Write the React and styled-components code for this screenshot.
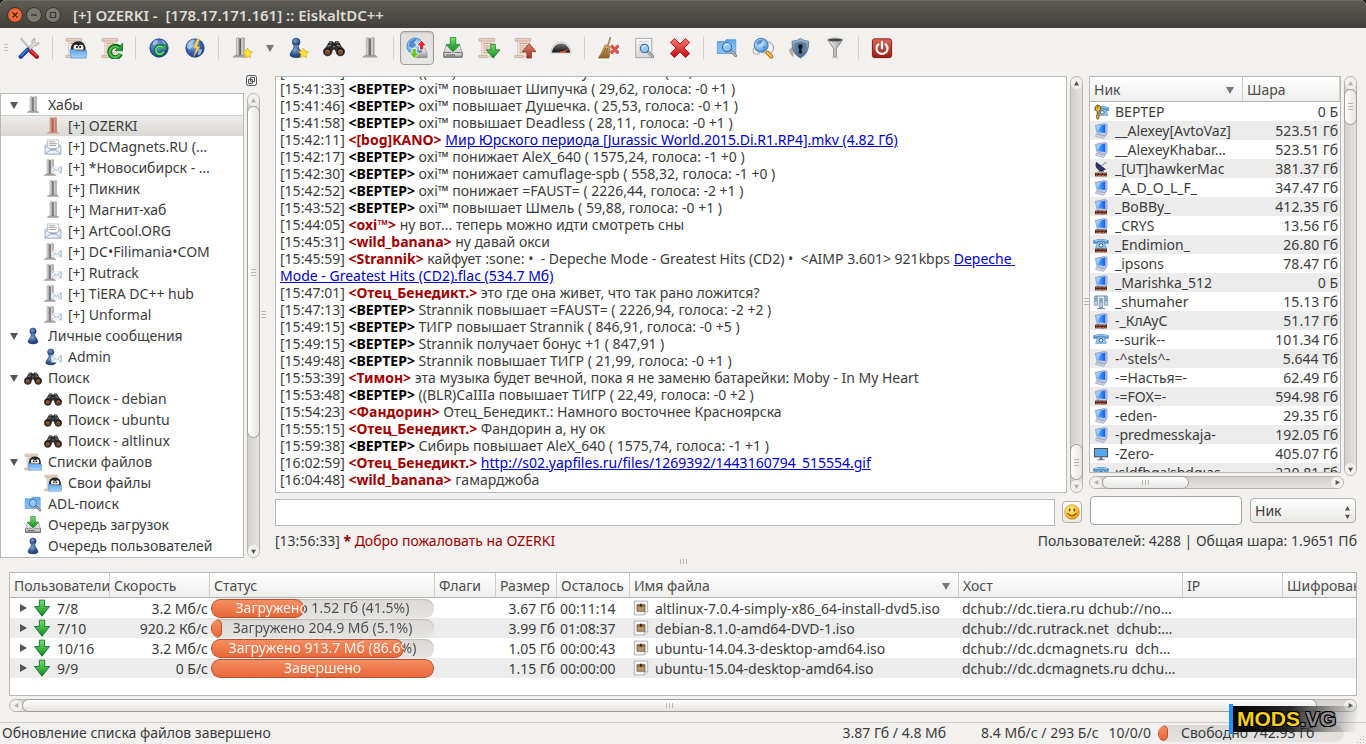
import React from "react";
import styled, { createGlobalStyle, css } from "styled-components";

const GlobalStyle = createGlobalStyle`
  * { box-sizing: border-box; }
  html, body { margin: 0; padding: 0; background: #1b1a18; }
  body, button, input, select, table {
    font-family: "Noto Sans", "Open Sans", "DejaVu Sans", sans-serif;
    font-size: 14px;
    color: #3c3c3c;
  }
  svg { display: block; flex: none; }
`;

/* ---------- shared gradients ---------- */

const Defs = styled.svg`
  position: absolute;
  width: 0;
  height: 0;
`;

const lin = (id, a, b, horizontal) => (
  <linearGradient id={id} x1="0" y1="0" x2={horizontal ? 1 : 0} y2={horizontal ? 0 : 1}>
    <stop offset="0" stopColor={a} />
    <stop offset="1" stopColor={b} />
  </linearGradient>
);

const rad = (id, a, b, c) => (
  <radialGradient id={id} cx="0.4" cy="0.35" r="0.7">
    <stop offset="0" stopColor={a} />
    <stop offset="0.6" stopColor={b} />
    <stop offset="1" stopColor={c} />
  </radialGradient>
);

const Gradients = () => (
  <Defs aria-hidden="true">
    <defs>
      {rad("gGlobe", "#8fb4e4", "#3560ae", "#1c3c84")}
      {rad("gGlobeLight", "#dceffd", "#7db8ec", "#3a78c4")}
      {rad("gSmile", "#fff2a0", "#fcc631", "#d98a08")}
      {rad("gPawn", "#7fa3cf", "#31578f", "#1b355f")}
      {lin("gGreen", "#7be070", "#0f8a22")}
      {lin("gRed", "#f47a70", "#c00d0d")}
      {lin("gBrown", "#d98476", "#a83226")}
      {lin("gFolder", "#5aa4ea", "#a9d4fa")}
      {lin("gMetal", "#fafafa", "#b4b4b4")}
      {lin("gPost", "#f4f4f4", "#9a9a9a", true)}
      {lin("gPostRed", "#f4c9bd", "#b95f4a", true)}
      {lin("gDisk", "#f3f3f3", "#8c8c8c")}
      {lin("gDark", "#777777", "#111111")}
      {lin("gShield", "#a6bdd2", "#3f5f80")}
      {lin("gPower", "#d9695c", "#9c1a10")}
      {lin("gScreen", "#6fc0ff", "#0f5fe8", true)}
      {lin("gStraw", "#dcb878", "#94672a")}
      {lin("gPage", "#fbfbfb", "#d8d8da")}
    </defs>
  </Defs>
);

/* ---------- icon parts ---------- */

const Scroll = () => (
  <g>
    <path d="M4 3h13v18.500H4z" fill="#f3e6dc" stroke="#d2bcae" strokeWidth=".8" />
    <path d="M1.500 1.500h16.500q1.200 1.500 0 3H1.500q-1.200-1.500 0-3z" fill="#e6cfc0" stroke="#bfa595" strokeWidth=".8" />
    <path d="M1 20h9v2.500H1q-1-1.200 0-2.500z" fill="#e6cfc0" stroke="#bfa595" strokeWidth=".7" />
    <path d="M6 7h9M6 9.500h8M6 12h9M6 14.500h7M6 17h8" stroke="#bf937c" strokeWidth="1.200" strokeDasharray="2.400 .7" />
  </g>
);

const Post = ({ red }) => (
  <g>
    <path d="M4 22h16l-2.500-2h-11z" fill={red ? "#d8a294" : "#a8a8a8"} stroke={red ? "#c58d7e" : "#8b8b8b"} strokeWidth=".5" />
    <path d="M8 1h3v19H8z" fill={red ? "url(#gPostRed)" : "url(#gPost)"} stroke={red ? "#b87060" : "#8f8f8f"} strokeWidth=".7" />
    <path d="M13 1h3.500v19H13z" fill={red ? "url(#gPostRed)" : "url(#gPost)"} stroke={red ? "#b87060" : "#8f8f8f"} strokeWidth=".7" />
    <path d="M12 1.500v18.500" stroke={red ? "#93382a" : "#3f3f3f"} strokeWidth="1.400" />
  </g>
);

const Star = () => (
  <path d="M18 12l1.800 3.400 3.700.6-2.700 2.700.6 3.800-3.400-1.700-3.400 1.700.6-3.800-2.700-2.700 3.700-.6z" fill="#ffe13a" stroke="#dcae10" strokeWidth=".8" strokeLinejoin="round" />
);

const Pawn = () => (
  <g>
    <path d="M10 9h4q0 3.500 3 6.500 2 2.500 1.500 5-2.500 2-6.500 2t-6.500-2q-.5-2.500 1.500-5 3-3 3-6.500z" fill="url(#gPawn)" stroke="#1d3a68" strokeWidth=".7" />
    <circle cx="12" cy="5.500" r="4.200" fill="url(#gPawn)" stroke="#1d3a68" strokeWidth=".7" />
    <ellipse cx="12" cy="9.800" rx="3.400" ry="1" fill="#5f86b8" />
  </g>
);

const Disk = () => (
  <g>
    <path d="M5 8h14l3 9v5H2v-5z" fill="url(#gMetal)" stroke="#8a8a8a" strokeWidth=".8" />
    <path d="M2 17h20v5H2z" fill="url(#gDisk)" stroke="#5e5e5e" strokeWidth=".9" />
    <path d="M5 19.500h9" stroke="#444" strokeWidth="1.600" strokeDasharray="1.200 .8" />
    <circle cx="12" cy="13" r="4" fill="#e8e8e8" stroke="#a9a9a9" strokeWidth=".6" />
  </g>
);

const Lens = ({ x = 10, y = 9, r = 5 }) => (
  <g>
    <path d={`M${x + r * 0.7} ${y + r * 0.7}l6 6`} stroke="#777" strokeWidth="3" strokeLinecap="round" />
    <path d={`M${x + r * 0.7 + 1} ${y + r * 0.7 + 1}l5 5`} stroke="#cfcfcf" strokeWidth="1.200" strokeLinecap="round" />
    <circle cx={x} cy={y} r={r} fill="#8cc6f6" fillOpacity=".85" stroke="#3f6ea6" strokeWidth="1.200" />
    <path d={`M${x - r * 0.6} ${y - 1}q${r * 0.4}-${r * 0.6} ${r}-${r * 0.4}`} stroke="#e8f6ff" strokeWidth="1.200" fill="none" />
  </g>
);

const Envelope = () => (
  <g>
    <path d="M10 10h13v9H10z" fill="#f6f9fc" stroke="#cfd8e2" strokeWidth=".6" />
    <path d="M10.500 10.500l6 5 6-5M10.500 18.500l4.500-4.500M22.500 18.500l-4.500-4.500" fill="none" stroke="#8fb0d2" strokeWidth="1" />
    <path d="M22.800 10v9" stroke="#7b9cc0" strokeWidth="1" />
  </g>
);

const Bricks = () => (
  <g>
    <path d="M3 17.500h18V23H3z" fill="#3a1c14" />
    <path d="M4 18.200h4v1.600H4zM9 18.200h5v1.600H9zM15 18.200h5v1.600h-5zM4 21h2v1.500H4zM7 21h5v1.500H7zM13 21h4v1.500h-4zM18 21h2.500v1.500H18z" fill="#c06347" />
  </g>
);

const Screen = () => (
  <g>
    <path d="M5 17l10 3 4.500-5.500v3.500L16 23 4 20z" fill="#dde2f0" stroke="#7c86ac" strokeWidth=".9" />
    <path d="M3.500 3.500L17 .8l4 1v13.700l-4 3.500L6 15.500z" fill="#c3cdea" stroke="#7480ac" strokeWidth=".9" />
    <path d="M5 4.800l13.500-2.600V15L7 14z" fill="url(#gScreen)" />
    <path d="M5.500 5l7-1.400-5.500 8.500z" fill="#bfe4ff" fillOpacity=".6" />
  </g>
);

const Phone = () => (
  <g>
    <path d="M1 5.500q11-4 22 0v4h-5.500L16.500 7h-9l-1 2.500H1z" fill="#5aa0dc" stroke="#2f6fae" strokeWidth=".9" />
    <path d="M7 8.500h10l3 8.500H4z" fill="#9cccf0" stroke="#3a7ab8" strokeWidth=".9" />
    <circle cx="12" cy="12.500" r="2.800" fill="#e6f3fc" stroke="#1f4f86" strokeWidth="1.300" />
    <path d="M3 5.700q9-2.800 18 0" stroke="#cfe8fa" fill="none" />
  </g>
);

const drawings = {
  tools: (
    <g>
      <path d="M3 1.500l9.500 11" stroke="#9fa3a8" strokeWidth="2" />
      <path d="M3 1.500l9.500 11" stroke="#e9ebee" strokeWidth=".8" />
      <path d="M12 13.500l8.500 8" stroke="#b00e12" strokeWidth="4.600" strokeLinecap="round" />
      <path d="M12.500 13.300l7.500 7" stroke="#ea4a4a" strokeWidth="1.600" strokeLinecap="round" />
      <path d="M18.500 1.500a4 4 0 0 0-3 5.500l-5 6 2 2 5.500-5.500a4 4 0 0 0 5-3.500l-2.600 1.200-2.400-2.200z" fill="#d7d9dc" stroke="#93979c" strokeWidth=".8" />
      <path d="M10.500 14l-7.500 7.500" stroke="#153f9e" strokeWidth="4.600" strokeLinecap="round" />
      <path d="M10 13.800l-6.500 6.500" stroke="#5c8fe8" strokeWidth="1.400" strokeLinecap="round" />
    </g>
  ),
  fileList: (
    <g>
      <Scroll />
      <path d="M6.500 15Q6 4.500 14.500 4.500T22.500 15z" fill="#23262b" />
      <path d="M9.500 14q-1-6 3-5.500 2 .3 2.300 2 .3-1.700 2.200-2 4-.5 3 5.500z" fill="#f4f4f4" />
      <circle cx="13" cy="11" r="1.100" />
      <circle cx="16.500" cy="11" r="1.100" />
      <path d="M12.800 12.800l2 2 2-2z" fill="#efb52c" />
      <path d="M5.500 13.500h6l1 1.500H24l-1 8H6.500z" fill="url(#gFolder)" stroke="#4b8ccf" strokeWidth=".7" />
    </g>
  ),
  fileRefresh: (
    <g>
      <Scroll />
      <path d="M21.500 18.500a6.300 6.300 0 1 1-1.500-7" fill="none" stroke="#0c6e1c" strokeWidth="5" />
      <path d="M24 6.500V15h-8.500z" fill="#1f9a30" stroke="#0c6e1c" strokeWidth=".8" />
      <path d="M21 18.200a5.900 5.900 0 1 1-1.500-6.200" fill="none" stroke="#4fc257" strokeWidth="2.400" />
    </g>
  ),
  globeRefresh: (
    <g>
      <circle cx="12" cy="12" r="10" fill="url(#gGlobe)" stroke="#17346e" strokeWidth=".8" />
      <path d="M6 4q3-1 5 0l-2 3-4 2zM14 3q4 1 6 5l-3-1z" fill="#b8dcf8" fillOpacity=".7" />
      <path d="M17.500 15.500a4.800 4.800 0 1 1-1-4.500" fill="none" stroke="#0c7d28" strokeWidth="3.600" />
      <path d="M19.500 7.500V14h-6.500z" fill="#2fb33f" />
      <path d="M17 15.500a4.300 4.300 0 1 1-1-4" fill="none" stroke="#7be084" strokeWidth="1.600" />
    </g>
  ),
  globeBolt: (
    <g>
      <circle cx="12" cy="12" r="10" fill="url(#gGlobe)" stroke="#17346e" strokeWidth=".8" />
      <path d="M4 7q4-5 8-4l-3 4 1 3-4 4-3-3zM16 13l4 1-2 5-3 1z" fill="#bfe0fa" fillOpacity=".7" />
      <path d="M14 2.500L10.500 12h3L10.500 21.500l7-11h-3.500L17 2.500z" fill="#ffd860" stroke="#e5a01c" strokeWidth=".6" />
    </g>
  ),
  server: <Post />,
  serverRed: <Post red />,
  serverStar: (
    <g>
      <g transform="translate(-2 0)"><Post /></g>
      <Star />
    </g>
  ),
  serverMail: (
    <g>
      <g transform="translate(-4 0)"><Post /></g>
      <Envelope />
    </g>
  ),
  mail: (
    <g>
      <path d="M1.500 10L5 7h14l3.500 3v11.500h-21z" fill="#dfe6ee" stroke="#a3adb8" strokeWidth=".8" />
      <path d="M4.500 2.500h15V14h-15z" fill="#fafafa" stroke="#a5a5a5" strokeWidth=".8" />
      <path d="M7 5h8M7 7.500h10M7 10h9" stroke="#8b8b8b" strokeWidth="1" />
      <path d="M1.500 10.500L10 16h4l8.500-5.500v11h-21z" fill="#e8eff6" stroke="#8aa2bc" strokeWidth=".9" />
      <path d="M2 21l7-5.500h6l7 5.500" fill="none" stroke="#7094bc" strokeWidth="1" />
    </g>
  ),
  pawn: <Pawn />,
  pawnStar: (
    <g>
      <g transform="translate(-2 0)"><Pawn /></g>
      <Star />
    </g>
  ),
  pawnMail: (
    <g>
      <g transform="translate(-3 0)"><Pawn /></g>
      <Envelope />
    </g>
  ),
  binoculars: (
    <g>
      <path d="M5 8l2-3.500h3.500l1.500 2 1.500-2H17L19 8l4.300 7.500-1 3.500h-7L13 14h-2l-2.300 5h-7l-1-3.500z" fill="#2a2a2c" />
      <path d="M7 6.500l2.500-.5M14.500 6l2.500.5M5 10l4-1M15 9l4 1M11 10.500h2" stroke="#8c8c90" strokeWidth="1.300" />
      <circle cx="5" cy="16" r="4.600" fill="#161616" stroke="#444" strokeWidth=".8" />
      <circle cx="19" cy="16" r="4.600" fill="#161616" stroke="#444" strokeWidth=".8" />
      <circle cx="5" cy="16.500" r="2.900" fill="#7a4a26" />
      <circle cx="19" cy="16.500" r="2.900" fill="#7a4a26" />
      <path d="M3 15.500q2-2 4 0M17 15.500q2-2 4 0" stroke="#c98a58" fill="none" />
    </g>
  ),
  transfers: (
    <g>
      <path d="M12 13h9l2 5v4.500H9z" fill="url(#gDisk)" stroke="#8a8a8a" strokeWidth=".7" />
      <circle cx="10" cy="10" r="9" fill="url(#gGlobeLight)" stroke="#3c74b8" strokeWidth=".8" />
      <path d="M4 5q4-4 8-3l-3 4 2 3-4 3-4-2z" fill="#2a66ba" fillOpacity=".7" />
      <path d="M17 3.500l5.500 6h-3.200V14h-4.600V9.500h-3.200z" fill="#e02828" stroke="#fff" strokeWidth=".9" />
      <path d="M9 23.500l-5.500-6h3.200V12.500h4.600v5h3.200z" fill="#6cc424" stroke="#f4fff0" strokeWidth=".9" />
    </g>
  ),
  download: (
    <g>
      <Disk />
      <path d="M9 .5h6v8h4.500L12 16 4.500 8.500H9z" fill="url(#gGreen)" stroke="#187a1c" strokeWidth=".8" />
    </g>
  ),
  listDown: (
    <g>
      <Scroll />
      <path d="M14 8h5v6h5l-7.500 9L9 14h5z" fill="url(#gGreen)" stroke="#0d6c1c" strokeWidth=".8" />
    </g>
  ),
  listUp: (
    <g>
      <Scroll />
      <path d="M14 23h5v-7h5l-7.500-9L9 16h5z" fill="url(#gBrown)" stroke="#8c2c20" strokeWidth=".8" />
    </g>
  ),
  gauge: (
    <g>
      <path d="M.8 17.500Q2 5.500 12 5.500t11.200 12z" fill="#e9e9e9" stroke="#bdbdbd" strokeWidth=".8" />
      <path d="M2 16.800Q4 7 12 7t10 9.800z" fill="url(#gDark)" />
      <path d="M11 17l10.500-4.500-6.500 5z" fill="#ff5a14" />
      <path d="M10 17.500a2.600 2.600 0 0 1 5 0z" fill="#f06a1c" />
    </g>
  ),
  broom: (
    <g>
      <path d="M14.500 1l-3 9" stroke="#b8876a" strokeWidth="2" strokeLinecap="round" />
      <path d="M9 8.500l5 2q1 5-1 12.500H1.500Q6 16 9 8.500z" fill="url(#gStraw)" stroke="#8c6228" strokeWidth=".7" />
      <path d="M9.500 12L6 22M11.500 12L9.500 22" stroke="#755020" strokeWidth=".8" />
      <path d="M14.500 10.500l2-2 3 3 3-3 1.800 2-3 3 3 3-2 2-2.800-3-3 3-2-2 3-3z" fill="#e2544c" stroke="#b73a34" strokeWidth=".7" />
    </g>
  ),
  pageSearch: (
    <g>
      <path d="M3 1.500h17.500v21H3z" fill="url(#gPage)" stroke="#a2a4a8" strokeWidth="1" />
      <path d="M6 5h11M6 8h11M6 11h4M6 14h3M6 17h4" stroke="#c2c4c8" />
      <Lens x={12.5} y={12.5} r={4.5} />
    </g>
  ),
  cross: (
    <path d="M6 1.500l6 6.200 6-6.200L22.500 6l-6 6 6 6-4.500 4.500-6-6.200-6 6.200L1.500 18l6-6-6-6z" fill="url(#gRed)" stroke="#b01010" strokeWidth="1" />
  ),
  folderSearch: (
    <g>
      <path d="M1.500 5h8l1.500-2h10.500v15h-20z" fill="url(#gFolder)" stroke="#5290d2" strokeWidth=".9" />
      <path d="M1.500 7h20v11h-20z" fill="#7db8f0" fillOpacity=".7" />
      <Lens x={12} y={11} r={5} />
    </g>
  ),
  globeSearch: (
    <g>
      <circle cx="17" cy="12" r="6.500" fill="#f2f2f2" stroke="#8e8e8e" />
      <circle cx="5" cy="15" r="4" fill="#f2f2f2" stroke="#a0a0a0" />
      <path d="M17 17l4 4.500" stroke="#c27d12" strokeWidth="4.400" strokeLinecap="round" />
      <path d="M17 17l4 4" stroke="#ffc24a" strokeWidth="2" strokeLinecap="round" />
      <circle cx="10" cy="9" r="7.600" fill="url(#gGlobeLight)" stroke="#5b82b4" strokeWidth="1.200" />
      <path d="M5 6q3-4 7-3l-2 4-4 2zM12 10l3 0-2 4z" fill="#2f6ec0" fillOpacity=".7" />
    </g>
  ),
  shield: (
    <g>
      <path d="M1 14q3-4 5-3v11q-4-2-5-8z" fill="#b2aca4" />
      <path d="M4.500 4.500Q10 4.500 13.500 1.500 17 4.500 22.500 4.500 23.500 18 13.500 23 3.500 18 4.500 4.500z" fill="url(#gShield)" stroke="#5d7690" strokeWidth=".9" />
      <path d="M7 6.500q4 0 6.500-2 2.500 2 6.500 2 .5 10-6.500 14Q6.500 16.500 7 6.500z" fill="#5a7c9e" />
      <circle cx="13.500" cy="10.500" r="2.500" fill="#0e1826" />
      <path d="M12.500 12h2l1 6h-4z" fill="#0e1826" />
    </g>
  ),
  funnel: (
    <g>
      <path d="M4 3l6.500 9.500V22h3V12.500L20.500 3z" fill="url(#gPost)" stroke="#777" strokeWidth=".9" />
      <ellipse cx="12.200" cy="3.200" rx="8.300" ry="2" fill="#444" stroke="#b4b4b4" strokeWidth="1" />
      <path d="M8.500 22.500h7.500" stroke="#ccc" strokeWidth="1.600" />
    </g>
  ),
  power: (
    <g>
      <rect x="1.500" y="2" width="21" height="20.500" rx="2.500" fill="url(#gPower)" stroke="#86150e" />
      <path d="M8 8a6 6 0 1 0 8 0" fill="none" stroke="#fff" strokeWidth="2.400" strokeLinecap="round" />
      <path d="M12 5.500v7" stroke="#fff" strokeWidth="2.400" strokeLinecap="round" />
    </g>
  ),
  screen: <Screen />,
  screenWall: (<g><Screen /><Bricks /></g>),
  phone: <Phone />,
  phoneWall: (<g><Phone /><Bricks /></g>),
  key: (
    <g>
      <g transform="translate(2 0)"><Phone /></g>
      <path d="M7 1.500a5 5 0 0 1 2 9.500v10.500l-2 1.500-2.200-2 1.500-1.500-1.500-1.500 1.500-1.500V11A5 5 0 0 1 7 1.500z" fill="#f2b42c" stroke="#5c3c08" strokeWidth="1.200" />
      <circle cx="7" cy="4.500" r="1.200" fill="#5c3c08" />
    </g>
  ),
  dish: (
    <g>
      <path d="M8 16l4-5 5 5z" fill="#555" />
      <path d="M5 2q-2 8 3.500 11 5 3 10-.5z" fill="#2b3470" stroke="#11163c" />
      <path d="M12 8l7-6" stroke="#777" strokeWidth="1.500" />
      <circle cx="19" cy="2.500" r="1.500" fill="#aaa" />
      <Bricks />
    </g>
  ),
  cluster: (
    <g>
      <path d="M2 4h5v13H2zM9.500 6h5v14h-5zM17 4h5v13h-5z" fill="#bcd0e2" stroke="#6585a6" />
      <path d="M3 3l18 0M3 7h3M10.500 9h3M18 7h3M3 10h3M10.500 12h3M18 10h3M12 20v3M6 22h12" stroke="#4a6f98" strokeWidth="1.300" />
    </g>
  ),
  display: (
    <g>
      <path d="M1.500 3h21v14h-21z" fill="#4a4d52" />
      <path d="M3 4.500h18v11H3z" fill="#55a8ea" />
      <path d="M10 17h4v3h3.500v1.500h-11V20H10z" fill="#6c7076" />
    </g>
  ),
  iso: (
    <g>
      <path d="M2 1.500h20v16l-5 5H2z" fill="#f4f4f5" stroke="#a4a6ab" strokeWidth="1.200" />
      <path d="M17 22.500v-5h5" fill="#d9dadd" stroke="#a4a6ab" />
      <path d="M6 7h12v10H6z" fill="#b89468" stroke="#6c4c28" />
      <path d="M6 7h12v3H6z" fill="#8a6a42" />
      <path d="M10.500 5.500h3v4.500h-3z" fill="#3c2a16" />
    </g>
  ),
  arrowDown: <path d="M8.500 1.500h7V10H22L12 23 2 10h6.500z" fill="url(#gGreen)" stroke="#12702c" strokeWidth="1.200" strokeLinejoin="round" />,
  smile: (
    <g>
      <circle cx="12" cy="12" r="11" fill="url(#gSmile)" stroke="#c07c10" strokeWidth=".8" />
      <ellipse cx="8.500" cy="9" rx="1.400" ry="2.200" fill="#6b4208" />
      <ellipse cx="15.500" cy="9" rx="1.400" ry="2.200" fill="#6b4208" />
      <path d="M5.500 14q6.500 7.500 13 0" fill="none" stroke="#7a4a08" strokeWidth="1.600" strokeLinecap="round" />
    </g>
  ),
};

const Icon = ({ name, size = 24 }) => (
  <svg width={size} height={size} viewBox="0 0 24 24" aria-hidden="true">
    {drawings[name]}
  </svg>
);

const Triangle = ({ dir = "down", color = "#555", size = 8 }) => {
  const d = { down: "M0 1h8L4 8z", up: "M0 7h8L4 0z", right: "M1 0v8l7-4z", left: "M7 0v8L0 4z" }[dir];
  return (
    <svg width={size} height={size} viewBox="0 0 8 8" aria-hidden="true">
      <path d={d} fill={color} />
    </svg>
  );
};

/* ---------- window frame ---------- */

const Window = styled.div`
  display: flex;
  flex-direction: column;
  height: 100vh;
  overflow: hidden;
  background: #f2f1f0;
  border-radius: 6px 6px 0 0;
`;

const TitleBar = styled.header`
  display: flex;
  align-items: center;
  gap: 3px;
  flex: none;
  height: 28px;
  padding-left: 7px;
  background: linear-gradient(#5d5b54, #403f3a);
  border-top: 1px solid #6b6962;
`;

const FrameButton = styled.button`
  display: grid;
  place-items: center;
  width: 16px;
  height: 16px;
  padding: 0;
  border: 1px solid #35342f;
  border-radius: 50%;
  background: ${(p) => (p.$close ? "radial-gradient(#f58057, #e0501f)" : "#7b7970")};
`;

const WindowTitle = styled.h1`
  margin: 0 0 0 9px;
  font-size: 15px;
  font-weight: 600;
  line-height: 20px;
  color: #dfdbd2;
  white-space: pre;
`;

/* ---------- toolbar ---------- */

const Toolbar = styled.nav`
  display: flex;
  align-items: center;
  flex: none;
  height: 42px;
  padding: 0 0 2px 4px;
`;

const Handle = styled.span`
  width: 7px;
  height: 9px;
  background: repeating-linear-gradient(#c4c2bf 0 1px, transparent 1px 3px) left / 4px 9px no-repeat;
`;

const ToolButton = styled.button`
  display: grid;
  place-items: center;
  width: 34px;
  height: 34px;
  margin: 0 1px;
  padding: 0;
  border: 1px solid transparent;
  border-radius: 4px;
  background: none;
  ${(p) => p.$checked && css`
    border-color: #a3a09c;
    background: linear-gradient(#e0dfdd, #e9e8e6);
    box-shadow: inset 0 1px 2px #c9c7c4;
  `}
`;

const MenuButton = styled(ToolButton)`
  width: 20px;
  margin: 0;
`;

const Divider = styled.span`
  width: 1px;
  height: 24px;
  margin: 0 5px;
  background: #d3d1ce;
`;

const toolItems = [
  ["tools", "Настройки"], "|",
  ["fileList", "Список файлов"], ["fileRefresh", "Обновить список"], "|",
  ["globeRefresh", "Переподключиться"], ["globeBolt", "Быстрое подключение"], "|",
  ["serverStar", "Избранные хабы"], "v", ["pawnStar", "Избранные пользователи"],
  ["binoculars", "Поиск"], ["server", "Публичные хабы"], "|",
  ["transfers", "Передачи", true], ["download", "Очередь загрузок"],
  ["listDown", "Завершённые загрузки"], ["listUp", "Завершённые отдачи"], ["gauge", "Ограничение скорости"], "|",
  ["broom", "Очистить чат"], ["pageSearch", "Найти в чате"], ["cross", "Закрыть"], "|",
  ["folderSearch", "ADL-поиск"], ["globeSearch", "Шпион поиска"], ["shield", "Антиспам"], ["funnel", "IP-фильтр"], "|",
  ["power", "Выход"],
];

/* ---------- scroll bars ---------- */

const ScrollTrack = styled.div`
  display: flex;
  flex: none;
  flex-direction: ${(p) => (p.$horizontal ? "row" : "column")};
  ${(p) => (p.$horizontal ? "height: 13px;" : "width: 13px;")}
  border: 1px solid #b6b3b0;
  border-radius: 7px;
  background: linear-gradient(${(p) => (p.$horizontal ? "180deg" : "90deg")}, #d2d0cd, #e4e2e0);
`;

const ScrollArrow = styled.button`
  display: grid;
  place-items: center;
  flex: none;
  width: 12px;
  height: 12px;
  padding: 0;
  border: 0;
  border-radius: 6px;
  background: #f1f0ef;
  ${(p) => (p.$horizontal ? "height: 11px;" : "width: 11px;")}
`;

const ScrollGap = styled.div`
  flex: ${(p) => p.$share} 1 0;
`;

const ScrollThumb = styled.div`
  display: grid;
  place-items: center;
  flex: ${(p) => p.$share} 1 0;
  margin: ${(p) => (p.$horizontal ? "-1px 0" : "0 -1px")};
  border: 1px solid #a09d99;
  border-radius: 7px;
  background: linear-gradient(${(p) => (p.$horizontal ? "180deg" : "90deg")}, #ffffff, #e6e4e2);
`;

const Grip = styled.span`
  ${(p) => p.$horizontal
    ? css`width: 7px; height: 5px; background: repeating-linear-gradient(90deg, #b9b7b4 0 1px, transparent 1px 3px);`
    : css`width: 5px; height: 7px; background: repeating-linear-gradient(#b9b7b4 0 1px, transparent 1px 3px);`}
`;

const ScrollBar = ({ horizontal, before = 0, thumb, after = 0 }) => (
  <ScrollTrack $horizontal={horizontal}>
    <ScrollArrow type="button" $horizontal={horizontal} aria-label="Назад">
      <Triangle dir={horizontal ? "left" : "up"} size={5} color={before ? "#555" : "#b5b3b0"} />
    </ScrollArrow>
    {before > 0 && <ScrollGap $share={before} />}
    <ScrollThumb $share={thumb} $horizontal={horizontal}><Grip $horizontal={horizontal} /></ScrollThumb>
    {after > 0 && <ScrollGap $share={after} />}
    <ScrollArrow type="button" $horizontal={horizontal} aria-label="Вперёд">
      <Triangle dir={horizontal ? "right" : "down"} size={5} color={after ? "#555" : "#b5b3b0"} />
    </ScrollArrow>
  </ScrollTrack>
);

/* ---------- left dock ---------- */

const Main = styled.main`
  display: flex;
  flex: 1;
  min-height: 0;
`;

const Dock = styled.aside`
  display: flex;
  flex-direction: column;
  flex: none;
  width: 260px;
`;

const DockHeader = styled.div`
  display: flex;
  justify-content: flex-end;
  align-items: center;
  flex: none;
  height: 23px;
  padding: 0 3px 2px 0;
`;

const FloatButton = styled.button`
  width: 11px;
  height: 11px;
  padding: 0;
  border: 0;
  background: none;
`;

const DockBody = styled.div`
  display: flex;
  gap: 3px;
  flex: 1;
  min-height: 0;
`;

const Tree = styled.ul`
  flex: 1;
  min-width: 0;
  margin: 0;
  padding: 0;
  overflow: hidden;
  list-style: none;
  background: #fff;
  border: 1px solid #b9b6b3;
`;

const TreeRow = styled.li`
  display: flex;
  align-items: center;
  height: 21px;
  padding-left: ${(p) => (p.$child ? 43 : 0)}px;
  line-height: 20px;
  white-space: nowrap;
  ${(p) => p.$selected && css`
    background: linear-gradient(#eeedeb, #dad8d5);
    box-shadow: inset 0 1px #cfcdca;
  `}
`;

const TreeToggle = styled.span`
  display: grid;
  place-items: center;
  width: 23px;
  padding-left: 2px;
`;

const TreeLabel = styled.span`
  padding-left: 6px;
`;

const treeItems = [
  ["server", "Хабы", "open"],
  ["serverRed", "[+] OZERKI", "child", true],
  ["mail", "[+] DCMagnets.RU (…", "child"],
  ["serverMail", "[+] *Новосибирск - …", "child"],
  ["server", "[+] Пикник", "child"],
  ["server", "[+] Магнит-хаб", "child"],
  ["mail", "[+] ArtCool.ORG", "child"],
  ["serverMail", "[+] DC•Filimania•COM", "child"],
  ["serverMail", "[+] Rutrack", "child"],
  ["serverMail", "[+] TiERA DC++ hub", "child"],
  ["serverMail", "[+] Unformal", "child"],
  ["pawn", "Личные сообщения", "open"],
  ["pawnMail", "Admin", "child"],
  ["binoculars", "Поиск", "open"],
  ["binoculars", "Поиск - debian", "child"],
  ["binoculars", "Поиск - ubuntu", "child"],
  ["binoculars", "Поиск - altlinux", "child"],
  ["fileList", "Списки файлов", "open"],
  ["fileList", "Свои файлы", "child"],
  ["folderSearch", "ADL-поиск", "leaf"],
  ["download", "Очередь загрузок", "leaf"],
  ["pawn", "Очередь пользователей", "leaf"],
];

const Splitter = styled.div`
  display: grid;
  place-items: center;
  flex: none;
  ${(p) => (p.$horizontal ? "height: 14px; padding-bottom: 8px;" : `width: ${p.$width}px; padding-right: ${p.$width > 10 ? 8 : 0}px;`)}
`;

/* ---------- chat ---------- */

const Hub = styled.section`
  display: flex;
  flex-direction: column;
  flex: 1;
  min-width: 0;
  padding: 6px 9px 8px 0;
`;

const HubBody = styled.div`
  display: flex;
  flex: 1;
  min-height: 0;
`;

const ChatColumn = styled.div`
  display: flex;
  flex-direction: column;
  gap: 6px;
  flex: 1;
  min-width: 0;
`;

const ScrollRow = styled.div`
  display: flex;
  gap: 3px;
  flex: 1;
  min-height: 0;
`;

const ChatLog = styled.div`
  display: flex;
  flex-direction: column;
  justify-content: flex-end;
  flex: 1;
  min-width: 0;
  padding: 0 20px 4px 4px;
  overflow: hidden;
  background: #fff;
  border: 1px solid #b9b6b3;
`;

const Message = styled.p`
  flex: none;
  margin: 0;
  line-height: 17px;
  white-space: pre-wrap;
`;

const Nick = styled.b`
  color: ${(p) => (p.$bot ? "#000" : "#a00000")};
`;

const ChatLink = styled.a`
  color: #0000c8;
  text-decoration: underline;
`;

const Entry = styled.div`
  display: flex;
  gap: 7px;
  align-items: center;
`;

const ChatInput = styled.input`
  flex: 1;
  min-width: 0;
  height: 27px;
  padding: 0 4px;
  background: #fff;
  border: 1px solid #b9b6b3;
`;

const SmileButton = styled.button`
  display: grid;
  place-items: center;
  width: 20px;
  height: 22px;
  margin: 0 1px 1px 0;
  padding: 0;
  border: 1px solid #b3b0ad;
  border-radius: 4px;
  background: linear-gradient(#fdfdfd, #e9e8e6);
`;

const V = "ВЕРТЕР";
const messages = [
  ["15:41:21", V, "((BLR)Са повышает Шипучка голоса ( 29,62"],
  ["15:41:33", V, "oxi™ повышает Шипучка ( 29,62, голоса: -0 +1 )"],
  ["15:41:46", V, "oxi™ повышает Душечка. ( 25,53, голоса: -0 +1 )"],
  ["15:41:58", V, "oxi™ повышает Deadless ( 28,11, голоса: -0 +1 )"],
  ["15:42:11", "[bog]KANO", "", "Мир Юрского периода [Jurassic World.2015.Di.R1.RP4].mkv (4.82 Гб)"],
  ["15:42:17", V, "oxi™ понижает AleX_640 ( 1575,24, голоса: -1 +0 )"],
  ["15:42:30", V, "oxi™ понижает camuflage-spb ( 558,32, голоса: -1 +0 )"],
  ["15:42:52", V, "oxi™ понижает =FAUST= ( 2226,44, голоса: -2 +1 )"],
  ["15:43:52", V, "oxi™ повышает Шмель ( 59,88, голоса: -0 +1 )"],
  ["15:44:05", "oxi™", "ну вот... теперь можно идти смотреть сны"],
  ["15:45:31", "wild_banana", "ну давай окси"],
  ["15:45:59", "Strannik", "кайфует :sone: •  - Depeche Mode - Greatest Hits (CD2) •  <AIMP 3.601> 921kbps ", "Depeche Mode - Greatest Hits (CD2).flac (534.7 Мб)"],
  ["15:47:01", "Отец_Бенедикт.", "это где она живет, что так рано ложится?"],
  ["15:47:13", V, "Strannik повышает =FAUST= ( 2226,94, голоса: -2 +2 )"],
  ["15:49:15", V, "ТИГР повышает Strannik ( 846,91, голоса: -0 +5 )"],
  ["15:49:15", V, "Strannik получает бонус +1 ( 847,91 )"],
  ["15:49:48", V, "Strannik повышает ТИГР ( 21,99, голоса: -0 +1 )"],
  ["15:53:39", "Тимон", "эта музыка будет вечной, пока я не заменю батарейки: Moby - In My Heart"],
  ["15:53:48", V, "((BLR)CaIIIa повышает ТИГР ( 22,49, голоса: -0 +2 )"],
  ["15:54:23", "Фандорин", "Отец_Бенедикт.: Намного восточнее Красноярска"],
  ["15:55:15", "Отец_Бенедикт.", "Фандорин а, ну ок"],
  ["15:59:38", V, "Сибирь повышает AleX_640 ( 1575,74, голоса: -1 +1 )"],
  ["16:02:59", "Отец_Бенедикт.", "", "http://s02.yapfiles.ru/files/1269392/1443160794_515554.gif"],
  ["16:04:48", "wild_banana", "гамарджоба"],
];

const HubStatus = styled.div`
  display: flex;
  justify-content: space-between;
  flex: none;
  padding-top: 6px;
  line-height: 18px;
  white-space: pre;
`;

const Notice = styled.span`
  color: #a00000;
`;

/* ---------- user list ---------- */

const UserColumn = styled.div`
  display: flex;
  flex-direction: column;
  flex: none;
  width: 268px;
`;

const UserBox = styled.div`
  flex: 1;
  min-width: 0;
  margin-bottom: 3px;
  overflow: hidden;
  background: #fff;
  border: 1px solid #b9b6b3;
`;

const DataTable = styled.table`
  width: ${(p) => p.$width};
  table-layout: fixed;
  border-collapse: separate;
  border-spacing: 0;
`;

const HeadCell = styled.th`
  height: ${(p) => p.$height || 25}px;
  padding: 1px 4px 0;
  font-weight: 400;
  line-height: 20px;
  text-align: left;
  white-space: nowrap;
  overflow: hidden;
  color: #4c4c4c;
  background: linear-gradient(#ffffff, #efeeed);
  border-right: 1px solid #cfcdca;
  border-bottom: 1px solid #b3b0ad;
`;

const HeadInner = styled.span`
  display: flex;
  justify-content: space-between;
  align-items: center;
  padding-right: 4px;
`;

const BodyRow = styled.tr`
  height: ${(p) => p.$height}px;
  &:nth-child(even) { background: #ececec; }
`;

const Cell = styled.td`
  padding: 0 2px 0 3px;
  line-height: 19px;
  white-space: pre;
  overflow: hidden;
  text-overflow: ${(p) => (p.$clip ? "clip" : "ellipsis")};
  text-align: ${(p) => p.$align || "left"};
`;

const IconText = styled.span`
  display: flex;
  align-items: center;
  gap: ${(p) => p.$gap || 6}px;
  padding-left: ${(p) => p.$indent || 0}px;
`;

const UserScroll = styled.div`
  display: flex;
  flex-direction: column;
  margin: 0 13px 7px 0;
`;

const FilterRow = styled.div`
  display: flex;
  align-items: center;
  gap: 8px;
  height: 30px;
  padding: 0 1px 1px 1px;
`;

const FilterInput = styled.input`
  flex: 1;
  min-width: 0;
  height: 29px;
  padding: 0 6px;
  background: #fff;
  border: 1px solid #a8a5a1;
  border-radius: 4px;
`;

const SelectWrap = styled.label`
  position: relative;
  flex: none;
  width: 106px;
`;

const Select = styled.select`
  appearance: none;
  display: block;
  width: 100%;
  height: 25px;
  padding: 0 20px 0 4px;
  border: 1px solid #b3b0ad;
  border-radius: 4px;
  background: linear-gradient(#fdfdfd, #e9e8e6);
`;

const SelectArrows = styled.span`
  position: absolute;
  top: 8px;
  right: 6px;
  display: grid;
  gap: 3px;
  pointer-events: none;
`;

const users = [
  ["key", "ВЕРТЕР", "0 Б"],
  ["screen", "__Alexey[AvtoVaz]", "523.51 Гб"],
  ["screen", "__AlexeyKhabar…", "523.51 Гб"],
  ["dish", "_[UT]hawkerMac", "381.37 Гб"],
  ["screen", "_A_D_O_L_F_", "347.47 Гб"],
  ["screenWall", "_BoBBy_", "412.35 Гб"],
  ["screenWall", "_CRYS", "13.56 Гб"],
  ["phoneWall", "_Endimion_", "26.80 Гб"],
  ["screen", "_ipsons", "78.47 Гб"],
  ["screenWall", "_Marishka_512", "0 Б"],
  ["cluster", "_shumaher", "15.13 Гб"],
  ["screenWall", "-_КлАуС", "51.17 Гб"],
  ["phone", "--surik--", "101.34 Гб"],
  ["screen", "-^stels^-", "5.644 Тб"],
  ["screen", "-=Настья=-", "62.49 Гб"],
  ["screenWall", "-=FOX=-", "594.98 Гб"],
  ["screen", "-eden-", "29.35 Гб"],
  ["screen", "-predmesskaja-", "192.05 Гб"],
  ["display", "-Zero-", "405.07 Гб"],
  ["phone", "ısldfbga'sbdgıas", "220.81 Гб"],
];

/* ---------- transfers ---------- */

const Transfers = styled.section`
  display: flex;
  flex-direction: column;
  gap: 3px;
  flex: none;
  padding: 0 9px 10px;
`;

const TransferBox = styled.div`
  height: 124px;
  overflow: hidden;
  background: #fff;
  border: 1px solid #b9b6b3;
`;

const ProgressBar = styled.div`
  height: 19px;
  margin: 0 -1px 0 -2px;
  overflow: hidden;
  border-radius: 9px;
  background: linear-gradient(#dcdad8, #e4e3e1);
  box-shadow: inset 0 1px 1px #bdbbb8;
  display: grid;
`;

const ProgressFill = styled.span`
  grid-area: 1 / 1;
  border: 1px solid #b8502c;
  border-radius: 9px;
  background: linear-gradient(#f68d62, #e8683a);
`;

const ProgressText = styled.span`
  grid-area: 1 / 1;
  z-index: 1;
  width: 100%;
  line-height: 18px;
  text-align: center;
  background-clip: text;
  -webkit-background-clip: text;
  -webkit-text-fill-color: transparent;
`;

const Progress = ({ value, children }) => (
  <ProgressBar role="progressbar" aria-valuenow={value} aria-label={children}>
    <ProgressFill style={{ width: `${value}%` }} />
    <ProgressText style={{ backgroundImage: `linear-gradient(90deg, #fff ${value}%, #4c4c4c ${value}%)` }}>
      {children}
    </ProgressText>
  </ProgressBar>
);

const transferColumns = [
  ["Пользователи", 100], ["Скорость", 100], ["Статус", 225], ["Флаги", 61], ["Размер", 61],
  ["Осталось", 73], ["Имя файла", 329], ["Хост", 224], ["IP", 100], ["Шифрование", 160],
];

const transfers = [
  ["7/8", "3.2 Мб/с", 41.5, "Загружено 1.52 Гб (41.5%)", "3.67 Гб", "00:11:14", "altlinux-7.0.4-simply-x86_64-install-dvd5.iso", "dchub://dc.tiera.ru dchub://no…"],
  ["7/10", "920.2 Кб/с", 5.1, "Загружено 204.9 Мб (5.1%)", "3.99 Гб", "01:08:37", "debian-8.1.0-amd64-DVD-1.iso", "dchub://dc.rutrack.net  dchub:…"],
  ["10/16", "3.2 Мб/с", 86.6, "Загружено 913.7 Мб (86.6%)", "1.05 Гб", "00:00:43", "ubuntu-14.04.3-desktop-amd64.iso", "dchub://dc.dcmagnets.ru  dch…"],
  ["9/9", "0 Б/с", 100, "Завершено", "1.15 Гб", "00:00:00", "ubuntu-15.04-desktop-amd64.iso", "dchub://dc.dcmagnets.ru dchu…"],
];

/* ---------- status bar ---------- */

const StatusBar = styled.footer`
  position: relative;
  display: flex;
  align-items: center;
  flex: none;
  height: 22px;
  padding: 0 22px 1px 2px;
  line-height: 20px;
  white-space: pre;
  border-top: 1px solid #d0cecb;
`;

const StatusText = styled.span`
  margin-right: ${(p) => (p.$grow ? "auto" : p.$space + "px")};
`;

const FreeSpace = styled.span`
  display: flex;
  align-items: center;
  width: 186px;
  height: 17px;
  overflow: hidden;
  border-radius: 9px;
  background: linear-gradient(#dcdad8, #e4e3e1);
`;

const FreeFill = styled.span`
  width: 10px;
  height: 16px;
  margin-right: 13px;
  border: 1px solid #b8502c;
  border-radius: 5px;
  background: linear-gradient(#f68d62, #e8683a);
`;

const Watermark = styled.div`
  position: absolute;
  right: 9px;
  bottom: 10px;
  width: 128px;
  height: 30px;
  padding: 2px 0 2px 4px;
  background: linear-gradient(#1e90ff, #1e90ff) left / 4px 100% no-repeat;
`;

const WatermarkText = styled.div`
  height: 26px;
  padding-left: 4px;
  font-family: "Liberation Sans", Arial, sans-serif;
  font-size: 21px;
  font-weight: 700;
  line-height: 25px;
  color: #f6cf1c;
  text-shadow: 1px 1px 0 #000, -1px -1px 0 #000, 1px -1px 0 #000, -1px 1px 0 #000;
  background: linear-gradient(100deg, #000 0, rgba(20, 20, 20, 0.9) 45%, rgba(90, 90, 90, 0.5) 78%, rgba(160, 160, 160, 0) 100%);
  span { color: #8c8c8c; }
`;

const SizeGrip = styled.svg`
  position: absolute;
  right: 1px;
  bottom: 0;
`;

export default function App() {
  return (
    <Window>
      <GlobalStyle />
      <Gradients />
      <TitleBar>
        <FrameButton $close aria-label="Закрыть окно">
          <svg width="8" height="8" viewBox="0 0 8 8"><path d="M1.500 1.500l5 5M6.500 1.500l-5 5" stroke="#4a1c0a" strokeWidth="1.400" /></svg>
        </FrameButton>
        <FrameButton aria-label="Свернуть">
          <svg width="8" height="8" viewBox="0 0 8 8"><path d="M1 4h6" stroke="#3a3934" strokeWidth="1.400" /></svg>
        </FrameButton>
        <FrameButton aria-label="Развернуть">
          <svg width="8" height="8" viewBox="0 0 8 8"><path d="M1.500 1.500h5v5h-5z" fill="none" stroke="#3a3934" strokeWidth="1.200" /></svg>
        </FrameButton>
        <WindowTitle>{"[+] OZERKI -  [178.17.171.161] :: EiskaltDC++"}</WindowTitle>
      </TitleBar>

      <Toolbar aria-label="Панель инструментов">
        <Handle />
        {toolItems.map((t, i) => {
          if (t === "|") return <Divider key={i} />;
          if (t === "v") return <MenuButton key={i} type="button" aria-label="Меню хабов"><Triangle color="#777" /></MenuButton>;
          return (
            <ToolButton key={i} type="button" aria-label={t[1]} $checked={t[2]}>
              <Icon name={t[0]} size={22} />
            </ToolButton>
          );
        })}
      </Toolbar>

      <Main>
        <Dock>
          <DockHeader>
            <FloatButton type="button" aria-label="Открепить панель">
              <svg width="11" height="11" viewBox="0 0 11 11">
                <rect x=".5" y=".5" width="10" height="10" rx="2" fill="none" stroke="#555" />
                <path d="M4.500 2.500h4v4h-4zM2.500 4.500h4v4h-4z" fill="none" stroke="#555" />
              </svg>
            </FloatButton>
          </DockHeader>
          <DockBody>
            <Tree role="tree">
              {treeItems.map(([icon, label, kind, selected], i) => (
                <TreeRow key={i} role="treeitem" $child={kind === "child"} $selected={selected}>
                  {kind !== "child" && <TreeToggle>{kind === "open" && <Triangle />}</TreeToggle>}
                  <Icon name={icon} size={18} />
                  <TreeLabel>{label}</TreeLabel>
                </TreeRow>
              ))}
            </Tree>
            <ScrollBar thumb={332} after={107} />
          </DockBody>
        </Dock>
        <Splitter $width={15}><Grip /></Splitter>

        <Hub>
          <HubBody>
            <ChatColumn>
              <ScrollRow>
                <ChatLog>
                  {messages.map(([time, nick, text, link], i) => (
                    <Message key={i}>
                      [{time}] <Nick $bot={nick === V}>{`<${nick}>`}</Nick> {text}
                      {link && <ChatLink href="#">{link}</ChatLink>}
                    </Message>
                  ))}
                </ChatLog>
                <ScrollBar before={357} thumb={34} />
              </ScrollRow>
              <Entry>
                <ChatInput type="text" aria-label="Сообщение" />
                <SmileButton type="button" aria-label="Смайлики"><Icon name="smile" size={16} /></SmileButton>
              </Entry>
            </ChatColumn>
            <Splitter $width={6}><Grip /></Splitter>
            <UserColumn>
              <ScrollRow>
                <UserBox>
                  <DataTable $width="100%">
                    <colgroup><col width="153" /><col /></colgroup>
                    <thead>
                      <tr>
                        <HeadCell><HeadInner>Ник<Triangle color="#777" /></HeadInner></HeadCell>
                        <HeadCell>Шара</HeadCell>
                      </tr>
                    </thead>
                    <tbody>
                      {users.map(([icon, name, share]) => (
                        <BodyRow key={name} $height={19}>
                          <Cell><IconText><Icon name={icon} size={16} />{name}</IconText></Cell>
                          <Cell $align="right">{share}</Cell>
                        </BodyRow>
                      ))}
                    </tbody>
                  </DataTable>
                </UserBox>
                <ScrollBar thumb={34} after={339} />
              </ScrollRow>
              <UserScroll><ScrollBar horizontal thumb={86} after={143} /></UserScroll>
              <FilterRow>
                <FilterInput type="text" aria-label="Фильтр пользователей" />
                <SelectWrap>
                  <Select aria-label="Поле фильтра" defaultValue="Ник">
                    <option>Ник</option>
                  </Select>
                  <SelectArrows>
                    <Triangle dir="up" size={5} />
                    <Triangle size={5} />
                  </SelectArrows>
                </SelectWrap>
              </FilterRow>
            </UserColumn>
          </HubBody>
          <HubStatus>
            <span>[13:56:33] <Notice><b>*</b> Добро пожаловать на OZERKI</Notice></span>
            <span>Пользователей: 4288 | Общая шара: 1.9651 Пб</span>
          </HubStatus>
        </Hub>
      </Main>

      <Splitter $horizontal><Grip $horizontal /></Splitter>

      <Transfers>
        <TransferBox>
          <DataTable $width="1433px">
            <colgroup>{transferColumns.map(([n, w]) => <col key={n} width={w} />)}</colgroup>
            <thead>
              <tr>
                {transferColumns.map(([name]) => (
                  <HeadCell key={name} $height={25}>
                    {name === "Имя файла" ? <HeadInner>{name}<Triangle color="#777" /></HeadInner> : name}
                  </HeadCell>
                ))}
              </tr>
            </thead>
            <tbody>
              {transfers.map(([peers, speed, value, status, size, left, file, host]) => (
                <BodyRow key={file} $height={20}>
                  <Cell $clip><IconText $indent={6}><Triangle dir="right" /><Icon name="arrowDown" size={18} />{peers}</IconText></Cell>
                  <Cell $align="right">{speed}</Cell>
                  <Cell $clip><Progress value={value}>{status}</Progress></Cell>
                  <Cell />
                  <Cell $align="right">{size}</Cell>
                  <Cell>{left}</Cell>
                  <Cell><IconText><Icon name="iso" size={16} />{file}</IconText></Cell>
                  <Cell>{host}</Cell>
                  <Cell />
                  <Cell />
                </BodyRow>
              ))}
            </tbody>
          </DataTable>
        </TransferBox>
        <ScrollBar horizontal thumb={1295} after={27} />
      </Transfers>

      <StatusBar>
        <StatusText $grow>Обновление списка файлов завершено</StatusText>
        <StatusText $space={35}>3.87 Гб / 4.8 Мб</StatusText>
        <StatusText $space={10}>8.4 Мб/с / 293 Б/с</StatusText>
        <StatusText $space={7}>10/0/0</StatusText>
        <FreeSpace><FreeFill />Свободно 742.93 Гб</FreeSpace>
        <Watermark><WatermarkText>MODS<span>.VG</span></WatermarkText></Watermark>
        <SizeGrip width="12" height="8" viewBox="0 0 12 8" aria-hidden="true">
          <path d="M10 0h1v1h-1zM7 3h1v1H7zM10 3h1v1h-1zM4 6h1v1H4zM7 6h1v1H7zM10 6h1v1h-1z" fill="#b5b3b0" />
        </SizeGrip>
      </StatusBar>
    </Window>
  );
}
